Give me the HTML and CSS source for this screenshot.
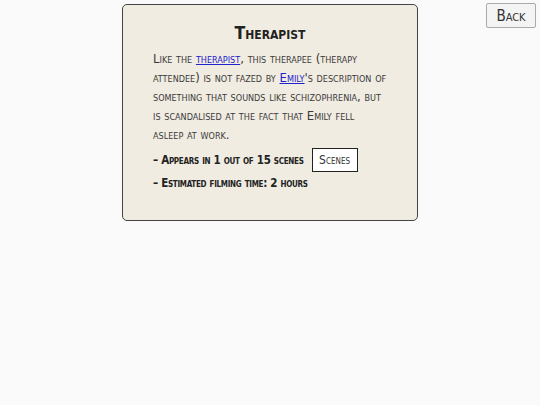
FILE: index.html
```html
<!DOCTYPE html>
<html lang="en">
<head>
    <meta charset="UTF-8">
    <meta name="viewport" content="width=device-width, initial-scale=1.0">
    <title>Therapist</title>
    <link rel="stylesheet" href="styles.css">
</head>
<body>

<button class="back-button">Back</button>

<div class="container">
    <div class="character-card">
        <h1>Therapist</h1>

        <!-- Character description -->
        <p class="description">
            Like the <a href="#">therapist</a>, this therapee (therapy attendee) is not fazed by <a href="#">Emily</a>'s description of something that sounds like schizophrenia, but is scandalised at the fact that Emily fell asleep at work.
        </p>

        <!-- Scene stats -->
        <div class="stat">
            <span>&ndash; Appears in 1 out of 15 scenes</span>
            <button class="scenes-button">Scenes</button>
        </div>
        <div class="stat">
            <span>&ndash; Estimated filming time: 2 hours</span>
        </div>
    </div>
</div>

</body>
</html>
```

FILE: styles.css
```css
body {
    font-family: "DejaVu Sans Condensed", "DejaVu Sans", sans-serif;
    font-variant: small-caps;
    background-color: #fafafa;
    color: #222;
    margin: 0;
    padding: 4px 0 0;
}
.container {
    width: 296px;
    margin: 0 auto;
}
.character-card {
    box-sizing: border-box;
    height: 217px;
    padding: 15px 30px 0;
    background-color: #f0ece1;
    border: 1px solid #444;
    border-radius: 5px;
}
.character-card h1 {
    margin: 0 0 3px;
    font-size: 17.5px;
    font-weight: bold;
    text-align: center;
    line-height: 26px;
}
.description {
    margin: 0 0 4px;
    font-size: 13px;
    line-height: 19px;
    color: #3a3a3a;
}
.description a {
    color: #2222cc;
}
.stat {
    display: flex;
    align-items: center;
    gap: 8px;
    font-size: 11.5px;
    font-weight: bold;
    letter-spacing: -0.3px;
    line-height: 22px;
}
.scenes-button {
    box-sizing: border-box;
    width: 46px;
    height: 24px;
    padding: 0;
    font-family: inherit;
    font-variant: small-caps;
    font-size: 12px;
    color: #333;
    background-color: #fff;
    border: 1px solid #222;
    cursor: pointer;
}
.back-button {
    position: absolute;
    top: 3px;
    right: 4px;
    width: 50px;
    height: 25px;
    font-family: inherit;
    font-variant: small-caps;
    font-size: 15px;
    background-color: #f4f4f4;
    border: 1px solid #aaa;
    border-radius: 2px;
    color: #333;
}
```
